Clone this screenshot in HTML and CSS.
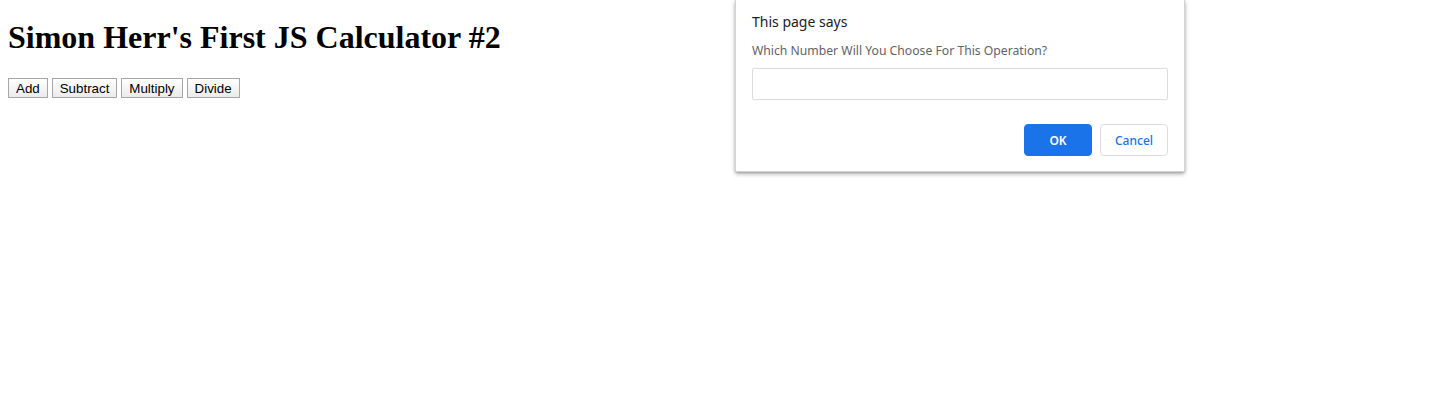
FILE: index.html
```html
<!DOCTYPE html>
<html>
<head>
<meta charset="utf-8">
<title>Simon Herr's First JS Calculator #2</title>
<link rel="stylesheet" href="styles.css">
</head>
<body>
<h1 class="title">Simon Herr's First JS Calculator #2</h1>
<div class="ops">
  <button class="op">Add</button>
  <button class="op">Subtract</button>
  <button class="op">Multiply</button>
  <button class="op">Divide</button>
</div>
<div class="dialog">
  <div class="dlg-title">This page says</div>
  <div class="dlg-msg">Which Number Will You Choose For This Operation?</div>
  <input class="dlg-input" type="text">
  <div class="dlg-actions">
    <button class="btn btn-ok">OK</button>
    <button class="btn btn-cancel">Cancel</button>
  </div>
</div>
</body>
</html>
```
FILE: styles.css
```css
html, body { background: #fff; }
body {
  margin: 0;
  padding: 8px;
  font-family: "Liberation Serif", serif;
}
.title {
  font-family: "Liberation Serif", serif;
  font-size: 32px;
  font-weight: bold;
  margin: 11px 0 22px;
  line-height: 37px;
  color: #000;
}
.ops {
  display: flex;
  gap: 4px;
}
.op {
  font-family: "Liberation Sans", Arial, sans-serif;
  font-size: 13.33px;
  color: #000;
  height: 20px;
  padding: 0 7px;
  border: 1px solid #a6a6a6;
  border-radius: 0;
  background: linear-gradient(#ffffff, #ebebeb);
  line-height: 17px;
}
.dialog {
  position: absolute;
  left: 735px;
  top: 0;
  width: 450px;
  box-sizing: border-box;
  padding: 11px 16px 15px;
  background: #fff;
  border: 1px solid #d4d4d4;
  border-top: none;
  border-radius: 0 0 2px 2px;
  box-shadow: 0 2px 4px rgba(0,0,0,0.3), 0 1px 2px rgba(0,0,0,0.15);
  font-family: "Noto Sans", "Open Sans", sans-serif;
}
.dlg-title {
  font-size: 14px;
  line-height: 22px;
  color: #202124;
}
.dlg-msg {
  font-size: 12.2px;
  line-height: 18px;
  color: #5f6368;
  margin-top: 9px;
}
.dlg-input {
  display: block;
  box-sizing: border-box;
  width: 100%;
  height: 32px;
  margin: 8px 0 0;
  border: 1px solid #dadce0;
  border-radius: 2px;
  background: #fff;
  outline: none;
}
.dlg-actions {
  display: flex;
  justify-content: flex-end;
  gap: 8px;
  margin-top: 24px;
}
.btn {
  box-sizing: border-box;
  height: 32px;
  width: 68px;
  border-radius: 4px;
  font-family: "Noto Sans", "Open Sans", sans-serif;
  font-size: 12px;
  font-weight: 600;
  padding: 0;
}
.btn-ok {
  background: #1a73e8;
  border: 1px solid #1a73e8;
  color: #fff;
}
.btn-cancel {
  background: #fff;
  border: 1px solid #dadce0;
  color: #1a73e8;
  font-weight: 500;
}
```
